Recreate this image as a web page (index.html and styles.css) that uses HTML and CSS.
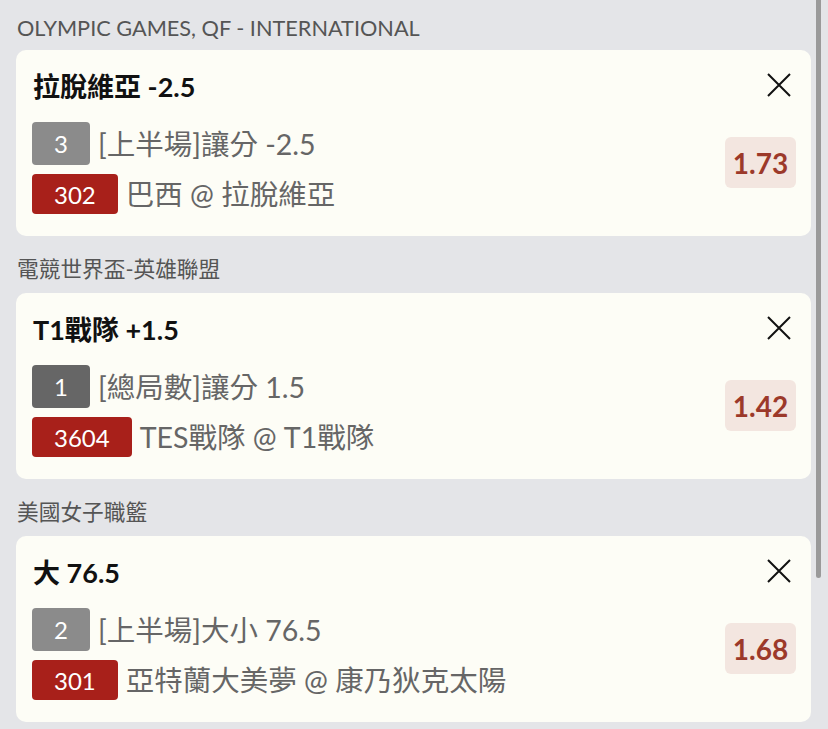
FILE: index.html
```html
<!DOCTYPE html>
<html lang="zh-Hant">
<head>
<meta charset="utf-8">
<link rel="stylesheet" href="styles.css">
</head>
<body>
<div class="list">
  <div class="league first">OLYMPIC GAMES, QF - INTERNATIONAL</div>
  <div class="card">
    <div class="main">
      <div class="title">拉脫維亞 -2.5</div>
      <div class="row"><span class="badge num gray">3</span><span class="txt">[上半場]讓分 -2.5</span></div>
      <div class="row"><span class="badge code">302</span><span class="txt">巴西 @ 拉脫維亞</span></div>
    </div>
    <div class="side">
      <svg class="close" viewBox="0 0 24 24"><path d="M1 1L23 23M23 1L1 23" stroke="#111" stroke-width="2" fill="none"/></svg>
      <div class="odds">1.73</div>
    </div>
  </div>

  <div class="league">電競世界盃-英雄聯盟</div>
  <div class="card">
    <div class="main">
      <div class="title">T1戰隊 +1.5</div>
      <div class="row"><span class="badge num dark">1</span><span class="txt">[總局數]讓分 1.5</span></div>
      <div class="row"><span class="badge code">3604</span><span class="txt">TES戰隊 @ T1戰隊</span></div>
    </div>
    <div class="side">
      <svg class="close" viewBox="0 0 24 24"><path d="M1 1L23 23M23 1L1 23" stroke="#111" stroke-width="2" fill="none"/></svg>
      <div class="odds">1.42</div>
    </div>
  </div>

  <div class="league">美國女子職籃</div>
  <div class="card">
    <div class="main">
      <div class="title">大 76.5</div>
      <div class="row"><span class="badge num gray">2</span><span class="txt">[上半場]大小 76.5</span></div>
      <div class="row"><span class="badge code">301</span><span class="txt">亞特蘭大美夢 @ 康乃狄克太陽</span></div>
    </div>
    <div class="side">
      <svg class="close" viewBox="0 0 24 24"><path d="M1 1L23 23M23 1L1 23" stroke="#111" stroke-width="2" fill="none"/></svg>
      <div class="odds">1.68</div>
    </div>
  </div>
</div>
<div class="scrollbar"></div>
</body>
</html>
```

FILE: styles.css
```css
* { box-sizing: border-box; }
html, body {
  margin: 0;
  padding: 0;
  background: #e4e5e8;
  height: 100%;
  overflow: hidden;
}
body {
  font-family: Lato, "Noto Sans CJK TC", sans-serif;
  color: #111;
}
.list {
  display: flex;
  flex-direction: column;
}
.league {
  padding: 21px 0 12px 17px;
  font-size: 21.7px;
  line-height: 24px;
  color: #555;
}
.league.first {
  padding-top: 16px;
  padding-bottom: 10px;
}
.card {
  margin: 0 17px 0 16px;
  height: 186px;
  background: #fdfdf6;
  border-radius: 10px;
  display: flex;
  padding: 22px 15px 0 16px;
}
.main {
  flex: 1;
  display: flex;
  flex-direction: column;
}
.title {
  font-weight: 700;
  font-size: 27px;
  line-height: 30px;
  color: #111;
  margin-bottom: 20px;
  padding-left: 1px;
}
.row {
  display: flex;
  align-items: center;
  gap: 8px;
}
.row + .row { margin-top: 9px; }
.badge {
  color: #fff;
  font-size: 24px;
  border-radius: 4px;
  display: flex;
  align-items: center;
  justify-content: center;
}
.badge.num {
  width: 58px;
  height: 43px;
}
.badge.gray { background: #8b8b8b; }
.badge.dark { background: #666666; }
.badge.code {
  height: 40px;
  padding: 0 22px;
  background: #a8201a;
}
.txt {
  font-size: 28.5px;
  color: #666;
  line-height: 32px;
}
.side {
  display: flex;
  flex-direction: column;
  align-items: flex-end;
}
.close {
  width: 24px;
  height: 24px;
  margin-top: 1px;
  margin-right: 5px;
}
.odds {
  margin-top: 40px;
  width: 71px;
  height: 51px;
  border-radius: 6px;
  background: #f3e6e0;
  color: #9c392a;
  font-weight: 700;
  font-size: 28px;
  display: flex;
  align-items: center;
  justify-content: center;
}
.scrollbar {
  position: fixed;
  top: 0;
  right: 7px;
  width: 5px;
  height: 578px;
  background: #9a9a9a;
  border-radius: 0 0 3px 3px;
}
```
